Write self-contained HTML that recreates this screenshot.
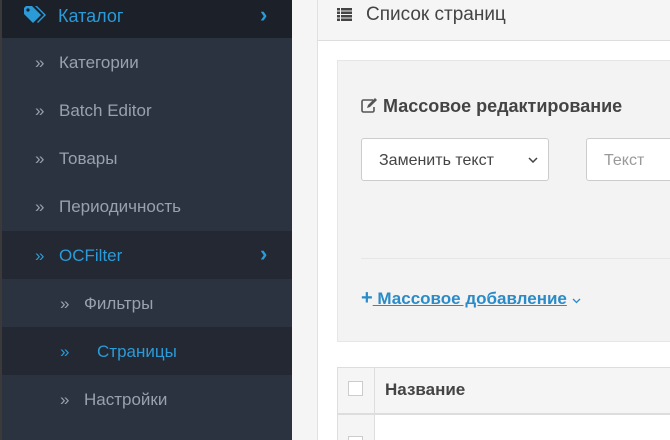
<!DOCTYPE html>
<html><head><meta charset="utf-8"><style>
*{margin:0;padding:0;box-sizing:border-box}
html,body{width:670px;height:440px;overflow:hidden}
body{font-family:"Liberation Sans",sans-serif;background:#fff;position:relative}
.sb{position:absolute;left:0;top:0;width:292px;height:440px;background:#2b3240;border-left:2px solid #3a3a3a}
.it{position:absolute;left:0;width:290px;height:48px;line-height:50px;color:#9aa1ad;font-size:17px}
.it .a{position:absolute;font-size:17px}
.dk{background:#232833}
.bl{color:#2a9bd8}
.chev{position:absolute;left:258px;font-size:22px;color:#2a9bd8;font-weight:bold;line-height:46px}
.gut{position:absolute;left:292px;top:0;width:26px;height:440px;background:#f5f5f5;border-right:1px solid #e0e0e0}
.hd{position:absolute;left:318px;top:0;width:352px;height:41px;background:#f5f5f5;border-bottom:1px solid #ddd;font-size:19px;color:#444;line-height:29px;padding-left:48px}
.pn{position:absolute;left:337px;top:60px;width:340px;height:282px;background:#f3f3f3;border:1px solid #e6e6e6}
.sel{position:absolute;left:361px;top:138px;width:188px;height:43px;background:#fff;border:1px solid #ccc;border-radius:3px;font-size:16px;color:#444;line-height:43px;padding-left:17px}
.inp{position:absolute;left:586px;top:138px;width:100px;height:43px;background:#fff;border:1px solid #ccc;border-radius:3px;font-size:16px;color:#999;line-height:43px;padding-left:17px}
</style></head><body>
<div class="sb">
<div class="it dk" style="top:-10px;height:48px;line-height:52px;background:#1c2028"><svg style="position:absolute;left:22px;top:16px" width="22" height="18" viewBox="0 0 22 18"><path d="M0 2V8l9 9 8-8-9-9H2Z" fill="#2a9bd8"/><circle cx="4" cy="4" r="1.6" fill="#1c2028"/><path d="M11 0h2l9 9-8 8-1-1 7-7Z" fill="#2a9bd8"/></svg><span class="bl" style="position:absolute;left:56px;font-size:18px">Каталог</span><span class="chev" style="top:2px">›</span></div>
<div class="it" style="top:38px"><span class="a" style="left:33px">»</span><span style="position:absolute;left:57px">Категории</span></div>
<div class="it" style="top:86px"><span class="a" style="left:33px">»</span><span style="position:absolute;left:57px">Batch Editor</span></div>
<div class="it" style="top:134px"><span class="a" style="left:33px">»</span><span style="position:absolute;left:57px">Товары</span></div>
<div class="it" style="top:182px"><span class="a" style="left:33px">»</span><span style="position:absolute;left:57px">Периодичность</span></div>
<div class="it dk bl" style="top:231px;color:#2a9bd8"><span class="a" style="left:33px">»</span><span style="position:absolute;left:57px">OCFilter</span><span class="chev">›</span></div>
<div class="it" style="top:279px"><span class="a" style="left:58px">»</span><span style="position:absolute;left:82px">Фильтры</span></div>
<div class="it dk" style="top:327px;color:#2a9bd8"><span class="a" style="left:58px">»</span><span style="position:absolute;left:95px">Страницы</span></div>
<div class="it" style="top:375px"><span class="a" style="left:58px">»</span><span style="position:absolute;left:82px">Настройки</span></div>
</div>
<div class="gut"></div>
<div class="hd"><svg style="position:absolute;left:19px;top:8px" width="15" height="13" viewBox="0 0 15 13"><g fill="#444"><rect x="0" y="0" width="3" height="2.5"/><rect x="4" y="0" width="11" height="2.5"/><rect x="0" y="3.5" width="3" height="2.5"/><rect x="4" y="3.5" width="11" height="2.5"/><rect x="0" y="7" width="3" height="2.5"/><rect x="4" y="7" width="11" height="2.5"/><rect x="0" y="10.5" width="3" height="2.5"/><rect x="4" y="10.5" width="11" height="2.5"/></g></svg>Список страниц</div>
<div class="pn"></div>
<div style="position:absolute;left:361px;top:96px;font-size:18px;font-weight:bold;color:#444"><svg width="17" height="15" viewBox="0 0 17 15" style="vertical-align:-1px"><path d="M12 2H2.5A1.5 1.5 0 0 0 1 3.5v9A1.5 1.5 0 0 0 2.5 14h9a1.5 1.5 0 0 0 1.5-1.5V9" fill="none" stroke="#555" stroke-width="1.6"/><path d="M6 10l1-3 7-7 2 2-7 7z" fill="#555"/></svg> Массовое редактирование</div>
<div class="sel">Заменить текст<svg style="position:absolute;right:10px;top:18px" width="10" height="6" viewBox="0 0 10 6"><path d="M1 1l4 4 4-4" fill="none" stroke="#444" stroke-width="1.5"/></svg></div>
<div class="inp">Текст</div>
<div style="position:absolute;left:361px;top:258px;width:320px;border-top:1px solid #e6e6e6"></div>
<div style="position:absolute;left:361px;top:289px;font-size:17px;font-weight:bold;color:#2a8bc8"><span style="font-size:20px;line-height:17px">+</span><u> Массовое добавление</u> <svg width="9" height="6" viewBox="0 0 9 6"><path d="M1 1l3.5 3.5L8 1" fill="none" stroke="#2a8bc8" stroke-width="1.3"/></svg></div>
<div style="position:absolute;left:337px;top:367px;width:340px;height:47px;border:1px solid #ddd;background:#f5f5f5"></div>
<div style="position:absolute;left:337px;top:413px;width:340px;height:40px;border:1px solid #ddd;border-top:2px solid #ddd;background:#fff"></div>
<div style="position:absolute;left:374px;top:367px;width:1px;height:80px;background:#ddd"></div>
<div style="position:absolute;left:338px;top:415px;width:36px;height:30px;background:#f5f5f5"></div>
<div style="position:absolute;left:348px;top:381px;width:15px;height:15px;background:#fff;border:1px solid #ccc"></div>
<div style="position:absolute;left:348px;top:436px;width:15px;height:15px;background:#fff;border:1px solid #ccc"></div>
<div style="position:absolute;left:385px;top:380px;font-size:17px;font-weight:bold;color:#444">Название</div>
</body></html>
